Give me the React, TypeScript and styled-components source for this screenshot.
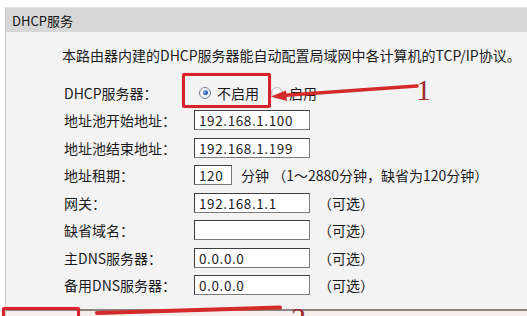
import React from "react";
import styled, { createGlobalStyle } from "styled-components";

const GlobalStyle = createGlobalStyle`
  html, body { margin: 0; padding: 0; background: #ffffff; }
  body {
    font-family: "Noto Sans CJK SC", "Noto Sans", sans-serif;
    color: #1a1a1a;
  }
`;

const Page = styled.div`
  position: relative;
  width: 527px;
  height: 316px;
  overflow: hidden;
  background: #ffffff;
  padding-top: 7px;
  padding-left: 5px;
  box-sizing: border-box;
`;

const Panel = styled.div`
  display: flex;
  flex-direction: column;
  height: 309px;
  border-left: 1px solid #c9c9c9;
`;

const Header = styled.div`
  height: 25px;
  line-height: 25px;
  padding-left: 6px;
  background: #d7d7d7;
  font-size: 13px;
  color: #111;
  border-top: 1px solid #e4e4e4;
  box-sizing: border-box;
`;

const Body = styled.div`
  flex: 1;
  background: #f3f3f3;
  padding-top: 13px;
  box-sizing: border-box;
`;

const Intro = styled.div`
  padding-left: 56px;
  font-size: 14px;
  line-height: 20px;
  height: 20px;
  white-space: nowrap;
`;

const Form = styled.div`
  display: grid;
  grid-template-columns: 130px 1fr;
  grid-auto-rows: 27.5px;
  margin-top: 14px;
  padding-left: 58px;
`;

const Label = styled.div`
  display: flex;
  align-items: center;
  font-size: 14px;
  line-height: 20px;
  white-space: nowrap;
`;

const Field = styled.div`
  display: flex;
  align-items: center;
  font-size: 14px;
  line-height: 20px;
  white-space: nowrap;
`;

const Radio = styled.span<{ $checked?: boolean; $gap: number }>`
  position: relative;
  display: inline-block;
  width: 12px;
  height: 12px;
  margin-left: ${(p) => p.$gap}px;
  margin-right: 6px;
  border-radius: 50%;
  box-sizing: border-box;
  border: 1px solid ${(p) => (p.$checked ? "#7b8596" : "#b9bdc3")};
  background: radial-gradient(circle at 40% 35%, #ffffff 0%, #e6e8ec 70%, #d3d6db 100%);
  &::after {
    content: "";
    display: ${(p) => (p.$checked ? "block" : "none")};
    position: absolute;
    left: 2.5px;
    top: 2.5px;
    width: 5px;
    height: 5px;
    border-radius: 50%;
    background: radial-gradient(circle at 35% 35%, #7fb0ea 0%, #2a5fb0 60%, #1d3f7d 100%);
  }
`;

const Input = styled.div<{ $w: number }>`
  width: ${(p) => p.$w}px;
  height: 20px;
  box-sizing: border-box;
  background: #ffffff;
  border: 1px solid #7a7a7a;
  border-top-color: #3f3f3f;
  border-left-color: #3f3f3f;
  padding-left: 4px;
  font-size: 13.5px;
  line-height: 18px;
  letter-spacing: 0.6px;
  color: #222;
  overflow: hidden;
`;

const After = styled.span<{ $gap: number }>`
  margin-left: ${(p) => p.$gap}px;
`;

const Footer = styled.div`
  height: 5px;
  border-top: 2px solid #8d8381;
  background: #f6eded;
`;

const RedBox = styled.div<{ $l: number; $t: number; $w: number; $h: number }>`
  position: absolute;
  left: ${(p) => p.$l}px;
  top: ${(p) => p.$t}px;
  width: ${(p) => p.$w}px;
  height: ${(p) => p.$h}px;
  box-sizing: border-box;
  border: 3.5px solid #d6232b;
  border-radius: 2px;
  box-shadow: 0 0 1px rgba(214, 35, 43, 0.6);
`;

const Overlay = styled.svg`
  position: absolute;
  left: 0;
  top: 0;
  pointer-events: none;
`;

const Num = styled.div<{ $l: number; $t: number }>`
  position: absolute;
  left: ${(p) => p.$l}px;
  top: ${(p) => p.$t}px;
  font-family: "Liberation Serif", serif;
  font-size: 30px;
  line-height: 30px;
  color: #9e2a2a;
`;

type Row = { label: string; value?: string; width?: number; after?: string; gap?: number };

const rows: Row[] = [
  { label: "地址池开始地址：", value: "192.168.1.100" },
  { label: "地址池结束地址：", value: "192.168.1.199" },
  { label: "地址租期：", value: "120", width: 38, after: "分钟 （1～2880分钟，缺省为120分钟）", gap: 9 },
  { label: "网关：", value: "192.168.1.1", after: "（可选）", gap: 8 },
  { label: "缺省域名：", value: "", after: "（可选）", gap: 8 },
  { label: "主DNS服务器：", value: "0.0.0.0", after: "（可选）", gap: 8 },
  { label: "备用DNS服务器：", value: "0.0.0.0", after: "（可选）", gap: 8 },
];

export default function App() {
  return (
    <>
      <GlobalStyle />
      <Page>
        <Panel>
          <Header>DHCP服务</Header>
          <Body>
            <Intro>本路由器内建的DHCP服务器能自动配置局域网中各计算机的TCP/IP协议。</Intro>
            <Form>
              <Label>DHCP服务器：</Label>
              <Field>
                <Radio $checked $gap={5} />
                不启用
                <Radio $gap={12} />
                启用
              </Field>
              {rows.map((r) => (
                <React.Fragment key={r.label}>
                  <Label>{r.label}</Label>
                  <Field>
                    <Input $w={r.width ?? 116}>{r.value}</Input>
                    {r.after && <After $gap={r.gap ?? 8}>{r.after}</After>}
                  </Field>
                </React.Fragment>
              ))}
            </Form>
          </Body>
          <Footer />
        </Panel>

        <RedBox $l={182} $t={73} $w={89} $h={35} />
        <RedBox $l={2} $t={307} $w={78} $h={20} />
        <Overlay width="527" height="316" viewBox="0 0 527 316">
          <line x1="417" y1="86" x2="282" y2="95.5" stroke="#d42a2a" strokeWidth="3.5" strokeLinecap="round" />
          <polygon points="271,96.5 286,90.5 287,101" fill="#d42a2a" />
          <line x1="97" y1="313" x2="280" y2="307.5" stroke="#d42a2a" strokeWidth="4" strokeLinecap="round" />
        </Overlay>
        <Num $l={416} $t={75}>1</Num>
        <Num $l={291} $t={303}>2</Num>
      </Page>
    </>
  );
}
